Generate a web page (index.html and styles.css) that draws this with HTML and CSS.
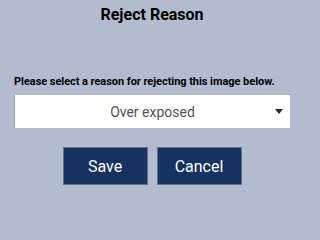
FILE: index.html
```html
<!DOCTYPE html>
<html>
<head>
<meta charset="utf-8">
<link rel="stylesheet" href="styles.css">
</head>
<body>
<div class="dialog">
  <h1 class="title">Reject Reason</h1>
  <label class="prompt" for="reason">Please select a reason for rejecting this image below.</label>
  <div class="select" id="reason">
    <span class="select-value">Over exposed</span>
    <span class="select-arrow"></span>
  </div>
  <div class="actions">
    <button class="btn">Save</button>
    <button class="btn">Cancel</button>
  </div>
</div>
</body>
</html>
```
FILE: styles.css
```css
html, body {
  margin: 0;
  padding: 0;
}
body {
  width: 304px;
  height: 203px;
  background: #b3bccf;
  font-family: Roboto, "Liberation Sans", sans-serif;
  overflow: hidden;
}
.dialog {
  display: flex;
  flex-direction: column;
  padding: 0 14px;
}
.title {
  margin: 5px 0 0;
  font-size: 16px;
  line-height: 20px;
  font-weight: bold;
  text-align: center;
  color: #000;
}
.prompt {
  margin-top: 50px;
  font-size: 11px;
  line-height: 14px;
  font-weight: bold;
  color: #000;
  white-space: nowrap;
  letter-spacing: -0.05px;
}
.select {
  position: relative;
  margin-top: 6px;
  height: 33px;
  background: #fff;
  border-left: 1px solid #9aa3b5;
  display: flex;
  align-items: center;
  justify-content: center;
}
.select-value {
  font-size: 14px;
  color: #57524d;
}
.select-arrow {
  position: absolute;
  right: 7px;
  top: 14px;
  width: 0;
  height: 0;
  border-left: 4px solid transparent;
  border-right: 4px solid transparent;
  border-top: 5px solid #2f2a24;
}
.actions {
  margin-top: 19px;
  display: flex;
  justify-content: center;
  gap: 9px;
}
.btn {
  width: 85px;
  height: 38px;
  margin: 0;
  padding: 0;
  background: #163260;
  border: 1px solid #5f7090;
  color: #fff;
  font-family: Roboto, "Liberation Sans", sans-serif;
  font-size: 16px;
}
```
